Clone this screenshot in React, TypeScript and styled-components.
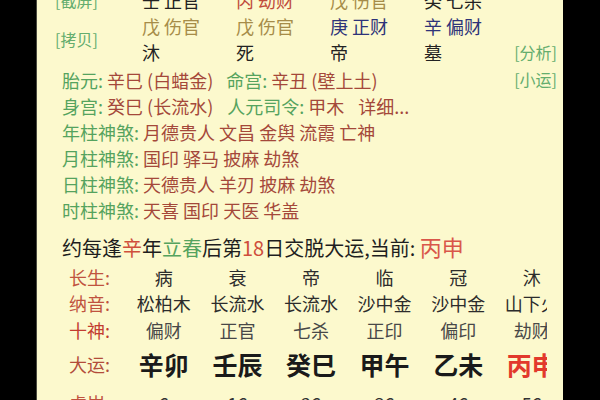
import React from 'react';
import styled, { createGlobalStyle } from 'styled-components';

const GlobalStyle = createGlobalStyle`
	html, body {
		margin: 0;
		padding: 0;
		background: #000;
	}
	body {
		font-family: "Noto Sans CJK SC", "Noto Sans", sans-serif;
	}
`;

const Frame = styled.div`
	width: 600px;
	height: 400px;
	box-sizing: border-box;
	padding: 0 37px 0 36px;
	background: #000;
	overflow: hidden;
`;

const Screen = styled.div`
	height: 100%;
	background: #fcf9cd;
	box-shadow: inset 1px 0 0 #4a4a40;
	overflow: hidden;
`;

// the page is scrolled a little, so the first row is cut at the top
const Scroll = styled.div`
	margin-top: -14px;
`;

const PillarGrid = styled.div`
	display: grid;
	grid-template-columns: 87px 94px 94px 94px 1fr auto;
	grid-template-rows: 27px 26px 26px 28px;
	padding: 0 6px 0 19px;
	font-size: 18px;
	line-height: 26px;
`;

const Cell = styled.div<{ $row: number; $col: number; $color: string }>`
	grid-row: ${(p) => p.$row};
	grid-column: ${(p) => p.$col};
	color: ${(p) => p.$color};
	white-space: nowrap;
	align-self: end;
`;

const SideLink = styled.div<{ $row: string; $col: number }>`
	grid-row: ${(p) => p.$row};
	grid-column: ${(p) => p.$col};
	align-self: center;
	font-size: 16px;
	line-height: 20px;
	color: #64ad6e;
	white-space: nowrap;
`;

const FirstInfo = styled.div`
	grid-row: 4;
	grid-column: 1 / 6;
	align-self: end;
	padding-left: 7px;
	white-space: nowrap;
`;

const InfoLines = styled.div`
	padding-left: 26px;
	font-size: 18px;
	line-height: 26px;
`;

const Line = styled.div`
	white-space: nowrap;
`;

const Label = styled.span<{ $gap?: number }>`
	color: #55a35e;
	margin-left: ${(p) => p.$gap || 0}px;
`;

const Value = styled.span<{ $gap?: number }>`
	color: #a4483a;
	margin-left: ${(p) => p.$gap || 0}px;
`;

const Notice = styled.div`
	margin-top: 8px;
	padding-left: 26px;
	font-size: 20px;
	line-height: 30px;
	color: #1e1e1e;
	white-space: nowrap;
`;

const Mark = styled.span<{ $color: string; $size?: number }>`
	color: ${(p) => p.$color};
	font-size: ${(p) => (p.$size ? `${p.$size}px` : 'inherit')};
`;

const TableClip = styled.div`
	margin: 1px 16px 0 0;
	overflow: hidden;
`;

const TableRow = styled.div<{ $h: number }>`
	display: grid;
	grid-template-columns: 58px repeat(6, 73.6px);
	align-items: center;
	height: ${(p) => p.$h}px;
	padding-left: 33px;
	width: max-content;
	font-size: 18px;
`;

const RowLabel = styled.div<{ $color: string }>`
	color: ${(p) => p.$color};
	white-space: nowrap;
`;

const RowValue = styled.div<{ $color: string; $big?: boolean }>`
	text-align: center;
	white-space: nowrap;
	color: ${(p) => p.$color};
	font-size: ${(p) => (p.$big ? 25 : 18)}px;
	font-weight: ${(p) => (p.$big ? 700 : 400)};
`;

const BLACK = '#222';
const OLIVE = '#a68c48';
const NAVY = '#2e3379';
const RED = '#c04c3c';

const pillars: { text: string; color: string }[][] = [
	[
		{ text: '壬 正官', color: BLACK },
		{ text: '丙 劫财', color: RED },
		{ text: '戊 伤官', color: OLIVE },
		{ text: '癸 七杀', color: BLACK },
	],
	[
		{ text: '戊 伤官', color: OLIVE },
		{ text: '戊 伤官', color: OLIVE },
		{ text: '庚 正财', color: NAVY },
		{ text: '辛 偏财', color: NAVY },
	],
	[
		{ text: '沐', color: BLACK },
		{ text: '死', color: BLACK },
		{ text: '帝', color: BLACK },
		{ text: '墓', color: BLACK },
	],
];

const shensha = [
	{ label: '年柱神煞:', value: '月德贵人 文昌 金舆 流霞 亡神' },
	{ label: '月柱神煞:', value: '国印 驿马 披麻 劫煞' },
	{ label: '日柱神煞:', value: '天德贵人 羊刃 披麻 劫煞' },
	{ label: '时柱神煞:', value: '天喜 国印 天医 华盖' },
];

const luckRows = [
	{ label: '长生:', labelColor: '#c0533f', h: 26, color: '#2c2c2c', values: ['病', '衰', '帝', '临', '冠', '沐'] },
	{ label: '纳音:', labelColor: '#c0533f', h: 26, color: '#2c2c2c', values: ['松柏木', '长流水', '长流水', '沙中金', '沙中金', '山下火'] },
	{ label: '十神:', labelColor: '#c23c30', h: 28, color: '#484848', values: ['偏财', '正官', '七杀', '正印', '偏印', '劫财'] },
	{ label: '大运:', labelColor: '#b24c3a', h: 40, color: '#1a1a1a', big: true, values: ['辛卯', '壬辰', '癸巳', '甲午', '乙未', '丙申'] },
	{ label: '虚岁:', labelColor: '#c0533f', h: 38, color: '#333', values: ['6', '16', '26', '36', '46', '56'] },
];

const App = () => {
	return (
		<>
			<GlobalStyle />
			<Frame>
				<Screen>
					<Scroll>
						<PillarGrid>
							<SideLink $row="1" $col={1}>[截屏]</SideLink>
							<SideLink $row="2 / 4" $col={1}>[拷贝]</SideLink>
							<SideLink $row="3" $col={6}>[分析]</SideLink>
							<SideLink $row="4" $col={6}>[小运]</SideLink>
							{pillars.map((row, r) =>
								row.map((cell, c) => (
									<Cell key={`${r}-${c}`} $row={r + 1} $col={c + 2} $color={cell.color}>
										{cell.text}
									</Cell>
								))
							)}
							<FirstInfo>
								<Label>胎元:</Label> <Value>辛巳 (白蜡金)</Value>
								<Label $gap={13}>命宫:</Label> <Value>辛丑 (壁上土)</Value>
							</FirstInfo>
						</PillarGrid>

						<InfoLines>
							<Line>
								<Label>身宫:</Label> <Value>癸巳 (长流水)</Value>
								<Label $gap={14}>人元司令:</Label> <Value>甲木</Value>
								<Value $gap={14}>详细...</Value>
							</Line>
							{shensha.map((s) => (
								<Line key={s.label}>
									<Label>{s.label}</Label> <Value>{s.value}</Value>
								</Line>
							))}
						</InfoLines>

						<Notice>
							约每逢<Mark $color="#cf4f3c">辛</Mark>年<Mark $color="#55a35e">立春</Mark>后第
							<Mark $color="#cf4f3c">18</Mark>日交脱大运,当前:{' '}
							<Mark $color="#d9574a" $size={22}>丙申</Mark>
						</Notice>

						<TableClip>
							{luckRows.map((row) => (
								<TableRow key={row.label} $h={row.h}>
									<RowLabel $color={row.labelColor}>{row.label}</RowLabel>
									{row.values.map((v, i) => (
										<RowValue
											key={i}
											$big={row.big}
											$color={row.big && i === 5 ? '#e2392c' : row.color}
										>
											{v}
										</RowValue>
									))}
								</TableRow>
							))}
						</TableClip>
					</Scroll>
				</Screen>
			</Frame>
		</>
	);
};

export default App;
